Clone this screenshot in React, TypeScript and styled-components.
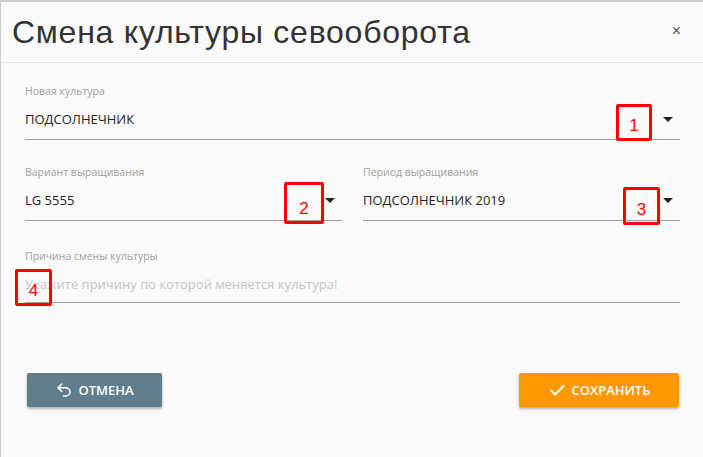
import React from "react";
import styled, { createGlobalStyle } from "styled-components";
import { Undo2, Check } from "lucide-react";

const GlobalStyle = createGlobalStyle`
  html, body {
    margin: 0;
    padding: 0;
    background: #cdcdcd;
    font-family: "Open Sans", "Noto Sans", sans-serif;
  }
`;

const Modal = styled.div`
  position: relative;
  margin: 2px 0 0 1px;
  width: 702px;
  height: 455px;
  background: #fafafa;
  box-sizing: border-box;
`;

const Header = styled.div`
  height: 60px;
  display: flex;
  align-items: center;
  justify-content: space-between;
  padding: 0 22px 0 11px;
  border-bottom: 1px solid #e6e6e6;
`;

const Title = styled.h1`
  margin: 0;
  font-family: "Liberation Sans", Arial, sans-serif;
  font-weight: 400;
  font-size: 32px;
  color: #333;
  letter-spacing: 0.75px;
`;

const Close = styled.button`
  border: none;
  background: none;
  padding: 0;
  margin-top: -2px;
  font-family: "Liberation Sans", Arial, sans-serif;
  font-size: 16px;
  color: #555;
`;

const Body = styled.div`
  padding: 0 23px 0 24px;
`;

const Row = styled.div<{ $mt: number }>`
  display: flex;
  gap: 21px;
  margin-top: ${(p) => p.$mt}px;
`;

const Field = styled.div`
  flex: 1;
  display: flex;
  flex-direction: column;
`;

const Label = styled.label`
  font-size: 10.5px;
  line-height: 14px;
  color: #9e9e9e;
  margin-bottom: 11px;
`;

const Value = styled.div<{ $pb: number }>`
  display: flex;
  align-items: center;
  justify-content: space-between;
  height: 20px;
  padding-bottom: ${(p) => p.$pb}px;
  border-bottom: 1px solid #9e9e9e;
  font-size: 13px;
  color: #222;
`;

const Placeholder = styled.span`
  color: #c4c4c4;
`;

const Caret = styled.span`
  width: 0;
  height: 0;
  margin-right: 7px;
  border-left: 5px solid transparent;
  border-right: 5px solid transparent;
  border-top: 5px solid #222;
`;

const Footer = styled.div`
  display: flex;
  justify-content: space-between;
  padding: 0 24px 0 26px;
  margin-top: 70px;
`;

const Button = styled.button<{ $bg: string; $w: number }>`
  display: flex;
  align-items: center;
  justify-content: center;
  gap: 5px;
  width: ${(p) => p.$w}px;
  height: 34px;
  border: none;
  border-radius: 2px;
  background: ${(p) => p.$bg};
  color: #fff;
  font-family: "Open Sans", sans-serif;
  font-size: 13px;
  font-weight: 600;
  box-shadow: 0 2px 3px rgba(0, 0, 0, 0.3);
  padding: 0;
`;

const Marker = styled.div<{ $x: number; $y: number; $w: number; $h: number }>`
  position: absolute;
  left: ${(p) => p.$x - 1}px;
  top: ${(p) => p.$y - 2}px;
  width: ${(p) => p.$w}px;
  height: ${(p) => p.$h}px;
  box-sizing: border-box;
  border: 3px solid #ff0000;
  border-radius: 2px;
  display: flex;
  align-items: flex-end;
  justify-content: center;
  padding-bottom: 4px;
  font-family: "Liberation Sans", Arial, sans-serif;
  font-size: 17px;
  line-height: 17px;
  color: #ff0000;
`;

export default function App() {
  return (
    <>
      <GlobalStyle />
      <Modal>
        <Header>
          <Title>Смена культуры севооборота</Title>
          <Close>×</Close>
        </Header>
        <Body>
          <Row $mt={21}>
            <Field>
              <Label>Новая культура</Label>
              <Value $pb={10}>
                ПОДСОЛНЕЧНИК
                <Caret />
              </Value>
            </Field>
          </Row>
          <Row $mt={25}>
            <Field>
              <Label>Вариант выращивания</Label>
              <Value $pb={10}>
                LG 5555
                <Caret />
              </Value>
            </Field>
            <Field>
              <Label>Период выращивания</Label>
              <Value $pb={10}>
                ПОДСОЛНЕЧНИК 2019
                <Caret />
              </Value>
            </Field>
          </Row>
          <Row $mt={28}>
            <Field>
              <Label>Причина смены культуры</Label>
              <Value $pb={8}>
                <Placeholder>Укажите причину по которой меняется культура!</Placeholder>
              </Value>
            </Field>
          </Row>
        </Body>
        <Footer>
          <Button $bg="#607d8b" $w={135}>
            <Undo2 size={18} strokeWidth={2} />
            ОТМЕНА
          </Button>
          <Button $bg="#ff9800" $w={160}>
            <Check size={19} strokeWidth={2.5} />
            СОХРАНИТЬ
          </Button>
        </Footer>
        <Marker $x={616} $y={104} $w={36} $h={37}>1</Marker>
        <Marker $x={284} $y={182} $w={40} $h={42}>2</Marker>
        <Marker $x={623} $y={187} $w={37} $h={38}>3</Marker>
        <Marker $x={15} $y={269} $w={37} $h={37}>4</Marker>
      </Modal>
    </>
  );
}
